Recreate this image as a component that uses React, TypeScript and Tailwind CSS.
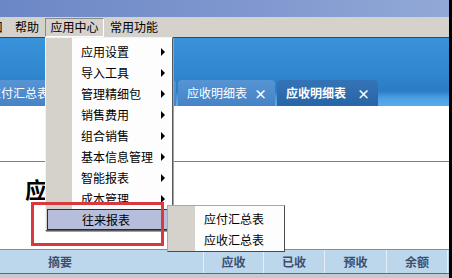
import React from 'react';

const font = { fontFamily: '"Noto Sans CJK SC", "Liberation Sans", sans-serif' };

const menuItems = ['应用设置', '导入工具', '管理精细包', '销售费用', '组合销售', '基本信息管理', '智能报表', '成本管理'];

function Arrow() {
  return <span className="w-0 h-0 border-y-[4px] border-y-transparent border-l-[4px] border-l-black" />;
}

function Tab({ label, active = false, width }: { label: string; active?: boolean; width: string }) {
  return (
    <div
      className={`${width} h-[26px] shrink-0 rounded-t-[4px] flex items-center justify-between pl-[9px] pr-[8px] text-white text-[12px] ${
        active ? 'bg-[linear-gradient(180deg,#3474b6_0%,#2864a6_100%)] font-bold' : 'bg-[linear-gradient(180deg,#5794d4_0%,#4583c6_100%)]'
      }`}
    >
      <span>{label}</span>
      <span className="font-bold text-[13px] leading-none">×</span>
    </div>
  );
}

export default function App() {
  return (
    <div className="relative w-[452px] h-[278px] overflow-hidden flex bg-black" style={font}>
      <div className="w-[449px] h-full flex flex-col bg-white">
        {/* title bar */}
        <div className="h-[17px] bg-[linear-gradient(90deg,#6c87c6_0%,#8199cf_60%,#92a9d7_100%)]" />

        {/* menu bar */}
        <div className="h-[20px] bg-[#d5d2cc] flex items-center text-[12px] text-black">
          <span className="w-[4px] overflow-hidden flex">
            <span className="ml-[-9px]">口</span>
          </span>
          <span className="ml-[11px]">帮助</span>
          <span className="ml-[6px] w-[59px] h-[19px] flex items-center justify-center border-t border-l border-[#8a8a8a] border-r-white border-b-white border-r border-b">
            应用中心
          </span>
          <span className="ml-[6px]">常用功能</span>
        </div>

        {/* tab strip */}
        <div className="h-[69px] border-t border-[#1f4d7e] flex flex-col justify-end bg-[linear-gradient(180deg,#3a93da_0%,#2f86ce_55%,#2a7cc4_78%,#4a9fe2_88%,#5aaaea_100%)]">
          <div className="flex gap-[2px] ml-[-20px]">
            <Tab label="应付汇总表" width="w-[97px]" />
            <Tab label="应收汇总表" width="w-[97px]" />
            <Tab label="应收明细表" width="w-[97px]" />
            <Tab label="应收明细表" width="w-[101px]" active />
          </div>
        </div>

        {/* content */}
        <div className="h-[143px] bg-white flex flex-col">
          <div className="h-[55px]" />
          <div className="border-t border-[#7d7d7d]" />
          <div className="mt-[15px] pl-[25px] text-[22px] leading-[22px] font-bold text-black">应收明细表</div>
        </div>

        {/* table header */}
        <div className="border-t border-[#8c8c8c]" />
        <div className="h-[23px] bg-[#bcd6ec] flex text-[12px] font-bold text-[#3d4f6e]">
          <div className="w-[203px] flex items-center pl-[48px]">摘要</div>
          <div className="w-[60px] border-l border-[#e3eef8] flex items-center justify-center">应收</div>
          <div className="w-[61px] border-l border-[#e3eef8] flex items-center justify-center">已收</div>
          <div className="w-[62px] border-l border-[#e3eef8] flex items-center justify-center">预收</div>
          <div className="w-[61px] border-l border-[#e3eef8] flex items-center justify-center">余额</div>
          <div className="flex-1 border-l border-[#e3eef8]" />
        </div>
        <div className="border-t border-[#5a6a80]" />
        <div className="flex-1 bg-[#c4cad4]" />
      </div>

      {/* dropdown menu */}
      <div className="absolute left-[45px] top-[37px] w-[128px] h-[194px] bg-[#fdfdfd] border-l border-t border-[#f2f2f2] border-r border-b border-r-[#5a5a5a] border-b-[#5a5a5a] shadow-[1px_1px_0_#a0a0a0] text-[12px] text-black">
        <div className="absolute left-0 top-0 bottom-0 w-[26px] bg-[#d5d2cc]" />
        <div className="relative pt-[3px] flex flex-col">
          {menuItems.map((item) => (
            <div key={item} className="h-[21px] flex items-center justify-between pl-[35px] pr-[7px]">
              <span>{item}</span>
              <Arrow />
            </div>
          ))}
          <div className="h-[21px] mx-[1px] flex items-center pl-[34px] bg-[#b6bedb] border border-[#1f2c58]">往来报表</div>
        </div>
      </div>

      {/* submenu */}
      <div className="absolute left-[167px] top-[205px] w-[118px] h-[47px] bg-[#fdfdfd] border-l border-t border-[#a8a8a8] border-r border-b border-r-[#4a4a4a] border-b-[#4a4a4a] text-[12px] text-black">
        <div className="absolute left-0 top-0 bottom-0 w-[27px] bg-[#d5d2cc]" />
        <div className="relative pt-[2px] flex flex-col">
          <div className="h-[21px] flex items-center pl-[36px]">应付汇总表</div>
          <div className="h-[21px] flex items-center pl-[36px]">应收汇总表</div>
        </div>
      </div>

      {/* highlight frame */}
      <div className="absolute left-[31px] top-[202px] w-[133px] h-[44px] border-[3px] border-[#d8393f]" />
    </div>
  );
}
